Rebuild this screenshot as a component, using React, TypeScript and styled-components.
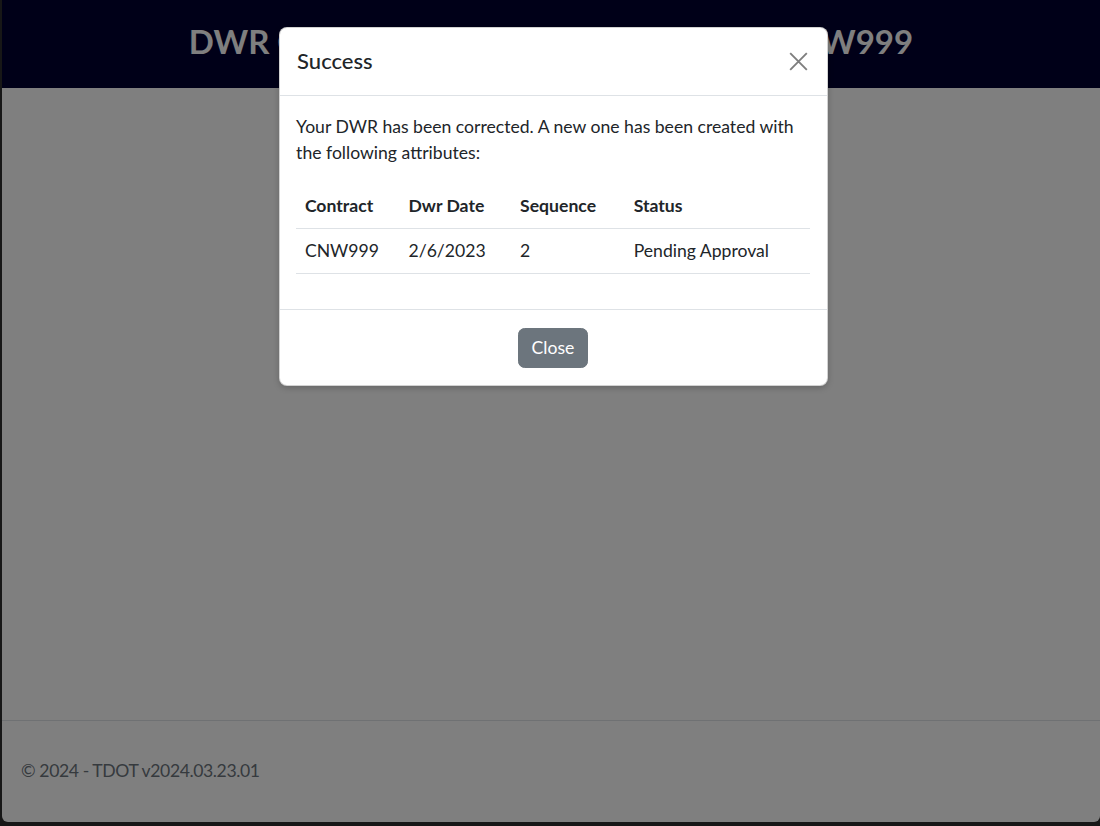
import styled, { createGlobalStyle } from "styled-components";

const GlobalStyle = createGlobalStyle`
  html, body {
    margin: 0;
    padding: 0;
    height: 100%;
  }

  body {
    font-family: Lato, "Open Sans", sans-serif;
    font-size: 17.6px;
    line-height: 1.5;
    color: #212529;
    background: #2e2e2e;
  }
`;

const Frame = styled.div`
  height: 826px;
  box-sizing: border-box;
  padding: 0 0 4px 2px;
  background: #2e2e2e;
  position: relative;
`;

const Page = styled.div`
  height: 100%;
  display: flex;
  flex-direction: column;
  background: #fff;
  border-radius: 0 0 6px 6px;
  overflow: hidden;
`;

const Header = styled.header`
  height: 88px;
  background: #000030;
  display: flex;
  align-items: center;
  justify-content: center;
  padding-bottom: 4px;
  box-sizing: border-box;
`;

const Title = styled.h1`
  margin: 0;
  color: #fff;
  font-size: 33px;
  font-weight: 700;
  letter-spacing: 0;
`;

const Main = styled.main`
  flex: 1;
`;

const Footer = styled.footer`
  height: 101px;
  border-top: 1px solid #dee2e6;
  display: flex;
  align-items: center;
  padding: 0 19px;
  color: #6c757d;
  letter-spacing: -0.4px;
`;

const Backdrop = styled.div`
  position: absolute;
  inset: 0;
  background: rgba(0, 0, 0, 0.5);
  display: flex;
  justify-content: center;
  align-items: flex-start;
  padding: 27px 0 0 6px;
  box-sizing: border-box;
`;

const Modal = styled.div`
  width: 549px;
  background: #fff;
  border: 1px solid rgba(0, 0, 0, 0.175);
  border-radius: 8px;
  box-sizing: border-box;
  box-shadow: 0 2px 6px rgba(0, 0, 0, 0.2);
`;

const ModalHeader = styled.div`
  display: flex;
  align-items: center;
  justify-content: space-between;
  padding: 16px 17.6px 18.2px;
  border-bottom: 1px solid #dee2e6;
`;

const ModalTitle = styled.h5`
  margin: 0;
  font-size: 22px;
  font-weight: 500;
  line-height: 1.5;
`;

const CloseIcon = styled.button`
  width: 22px;
  height: 22px;
  padding: 0;
  margin: 0 -1px -1px 0;
  border: 0;
  background: none;
  opacity: 0.5;
  display: flex;
  align-items: center;
  justify-content: center;
`;

const ModalBody = styled.div`
  padding: 17.6px 16.6px 17.6px 16.6px;
`;

const Text = styled.p`
  margin: 0 0 17.6px;
`;

const Table = styled.table`
  width: 100%;
  border-collapse: collapse;
  margin-bottom: 17.6px;
  table-layout: fixed;
`;

const Th = styled.th<{ $w?: number }>`
  text-align: left;
  font-weight: 700;
  padding: 8.8px;
  border-bottom: 1px solid #dee2e6;
  width: ${(p) => (p.$w ? `${p.$w}px` : "auto")};
`;

const Td = styled.td`
  padding: 8.8px;
  border-bottom: 1px solid #dee2e6;
`;

const ModalFooter = styled.div`
  display: flex;
  justify-content: center;
  padding: 13.2px;
  border-top: 1px solid #dee2e6;
`;

const Button = styled.button`
  margin: 4.4px;
  height: 40px;
  padding: 0 12.5px;
  font-family: inherit;
  font-size: 17.6px;
  color: #fff;
  background: #6c757d;
  border: 1px solid #6c757d;
  border-radius: 6.6px;
`;

export default function App() {
  return (
    <>
      <GlobalStyle />
      <Frame>
        <Page>
          <Header>
            <Title>DWR Correction Summary for Contract CNW999</Title>
          </Header>
          <Main />
          <Footer>© 2024 - TDOT v2024.03.23.01</Footer>
        </Page>
        <Backdrop>
          <Modal>
            <ModalHeader>
              <ModalTitle>Success</ModalTitle>
              <CloseIcon aria-label="Close">
                <svg width="19" height="19" viewBox="0 0 16 16">
                  <path d="M1 1L15 15M15 1L1 15" stroke="#000" strokeWidth="1.6" fill="none" />
                </svg>
              </CloseIcon>
            </ModalHeader>
            <ModalBody>
              <Text>
                Your DWR has been corrected. A new one has been created with the following attributes:
              </Text>
              <Table>
                <thead>
                  <tr>
                    <Th $w={86}>Contract</Th>
                    <Th $w={94}>Dwr Date</Th>
                    <Th $w={96}>Sequence</Th>
                    <Th>Status</Th>
                  </tr>
                </thead>
                <tbody>
                  <tr>
                    <Td>CNW999</Td>
                    <Td>2/6/2023</Td>
                    <Td>2</Td>
                    <Td>Pending Approval</Td>
                  </tr>
                </tbody>
              </Table>
            </ModalBody>
            <ModalFooter>
              <Button>Close</Button>
            </ModalFooter>
          </Modal>
        </Backdrop>
      </Frame>
    </>
  );
}
